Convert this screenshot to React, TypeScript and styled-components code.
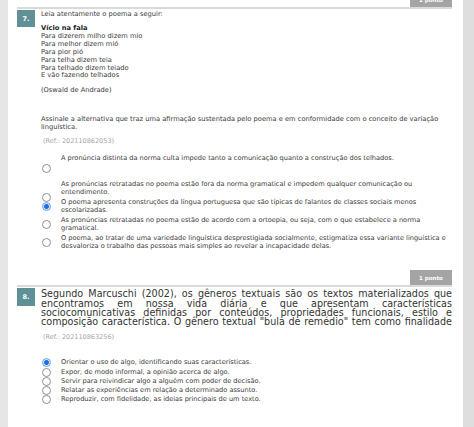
import React from "react";
import styled, { createGlobalStyle } from "styled-components";

const Global = createGlobalStyle`
  html, body { margin: 0; padding: 0; background: #fff; }
  body { font-family: "DejaVu Sans", Verdana, sans-serif; color: #3a3a3a; }
  * { box-sizing: border-box; }
`;

const Page = styled.div`
  display: flex;
  width: 474px;
  height: 427px;
  overflow: hidden;
  background: #fff;
`;

const LeftRail = styled.div`
  width: 8px;
  flex: none;
  background: #e6e6e6;
`;

const ScrollTrack = styled.div`
  width: 11px;
  flex: none;
  background: #dedede;
`;

const Main = styled.main`
  flex: 1;
  min-width: 0;
  padding: 0 11px 0 9px;
`;

const QuestionBlock = styled.section<{ $offset: number; $after: number }>`
  margin-top: ${(p) => p.$offset}px;
  margin-bottom: ${(p) => p.$after}px;
`;

const Header = styled.div`
  display: flex;
  justify-content: flex-end;
  height: 17px;
  border-bottom: 2px solid #dadada;
`;

const Badge = styled.div`
  width: 42px;
  height: 15px;
  background: #a4a4a4;
  color: #fff;
  font-weight: bold;
  font-size: 5.5px;
  display: flex;
  align-items: center;
  justify-content: center;
`;

const Body = styled.div`
  display: grid;
  grid-template-columns: 18px 1fr;
  column-gap: 6px;
  padding-top: 1px;
`;

const NumBox = styled.div<{ $h: number }>`
  height: ${(p) => p.$h}px;
  background: #5e9096;
  color: #fff;
  font-weight: bold;
  font-size: 6.5px;
  display: flex;
  align-items: center;
  justify-content: center;
`;

const Content = styled.div`
  min-width: 0;
  font-size: 6.7px;
`;

const Para = styled.p<{ $top: number; $lh?: number }>`
  margin: ${(p) => p.$top}px 0 0;
  line-height: ${(p) => p.$lh ?? 8}px;
  white-space: nowrap;
`;

const PoemTitle = styled.b`
  color: #222;
  font-weight: bold;
`;

const Lead = styled.p`
  margin: 1px 0 0;
  font-size: 9.6px;
  line-height: 9.25px;
  color: #333;
  text-align: justify;
  text-align-last: justify;
`;

const Ref = styled.p<{ $top: number }>`
  margin: ${(p) => p.$top}px 0 0 2px;
  font-size: 6.5px;
  line-height: 8px;
  color: #a5a5a5;
`;

const OptionList = styled.div<{ $top: number; $gap: number }>`
  margin-top: ${(p) => p.$top}px;
  display: flex;
  flex-direction: column;
  row-gap: ${(p) => p.$gap}px;
`;

const OptionRow = styled.div<{ $extra?: number; $lh: number }>`
  display: grid;
  grid-template-columns: 20px 1fr;
  align-items: center;
  padding-bottom: ${(p) => p.$extra ?? 0}px;
  line-height: ${(p) => p.$lh}px;
`;

const RadioCell = styled.div<{ $dropped: boolean }>`
  display: flex;
  padding-left: 1px;
  ${(p) => (p.$dropped ? "align-self: start; height: 0; overflow: visible;" : "")}
`;

const Radio = styled.span<{ $checked?: boolean; $drop?: number }>`
  flex: none;
  width: 9px;
  height: 9px;
  margin-top: ${(p) => p.$drop ?? 0}px;
  border-radius: 50%;
  border: 1px solid ${(p) => (p.$checked ? "#6fa3e8" : "#8e8e8e")};
  background: ${(p) =>
    p.$checked
      ? "radial-gradient(circle, #1f6fe0 0 2.1px, #d6e6fb 2.7px)"
      : "#fff"};
`;

const OptText = styled.div`
  white-space: nowrap;
  font-size: 6.6px;
`;

type Opt = { lines: string[]; checked?: boolean; drop?: number; extra?: number };

const q7Options: Opt[] = [
  {
    lines: ["A pronúncia distinta da norma culta impede tanto a comunicação quanto a construção dos telhados."],
    drop: 9.5,
    extra: 16,
  },
  {
    lines: [
      "As pronúncias retratadas no poema estão fora da norma gramatical e impedem qualquer comunicação ou",
      "entendimento.",
    ],
    drop: 13,
  },
  {
    lines: [
      "O poema apresenta construções da língua portuguesa que são típicas de falantes de classes sociais menos",
      "escolarizadas.",
    ],
    checked: true,
  },
  {
    lines: [
      "As pronúncias retratadas no poema estão de acordo com a ortoepia, ou seja, com o que estabelece a norma",
      "gramatical.",
    ],
  },
  {
    lines: [
      "O poema, ao tratar de uma variedade linguística desprestigiada socialmente, estigmatiza essa variante linguística e",
      "desvaloriza o trabalho das pessoas mais simples ao revelar a incapacidade delas.",
    ],
  },
];

const q8Options: Opt[] = [
  { lines: ["Orientar o uso de algo, identificando suas características."], checked: true },
  { lines: ["Expor, de modo informal, a opinião acerca de algo."] },
  { lines: ["Servir para reivindicar algo a alguém com poder de decisão."] },
  { lines: ["Relatar as experiências em relação a determinado assunto."] },
  { lines: ["Reproduzir, com fidelidade, as ideias principais de um texto."] },
];

const Options = ({ items, top, gap, lh }: { items: Opt[]; top: number; gap: number; lh: number }) => (
  <OptionList $top={top} $gap={gap}>
    {items.map((o, i) => (
      <OptionRow key={i} $extra={o.extra} $lh={lh}>
        <RadioCell $dropped={o.drop !== undefined}>
          <Radio $checked={o.checked} $drop={o.drop} />
        </RadioCell>
        <OptText>
          {o.lines.map((l, j) => (
            <React.Fragment key={j}>
              {j > 0 && <br />}
              {l}
            </React.Fragment>
          ))}
        </OptText>
      </OptionRow>
    ))}
  </OptionList>
);

const poem = [
  "Para dizerem milho dizem mio",
  "Para melhor dizem mió",
  "Para pior pió",
  "Para telha dizem teia",
  "Para telhado dizem teiado",
  "E vão fazendo telhados",
];

export default function App() {
  return (
    <>
      <Global />
      <Page>
        <LeftRail />
        <Main>
          <QuestionBlock $offset={-8} $after={20}>
            <Header>
              <Badge>1 ponto</Badge>
            </Header>
            <Body>
              <NumBox $h={17}>7.</NumBox>
              <Content>
                <Para $top={0}>Leia atentamente o poema a seguir:</Para>
                <Para $top={7} $lh={7.9}>
                  <PoemTitle>Vício na fala</PoemTitle>
                  {poem.map((l) => (
                    <React.Fragment key={l}>
                      <br />
                      {l}
                    </React.Fragment>
                  ))}
                </Para>
                <Para $top={6}>(Oswald de Andrade)</Para>
                <Para $top={21}>
                  Assinale a alternativa que traz uma afirmação sustentada pelo poema e em conformidade com o conceito de variação
                  <br />
                  linguística.
                </Para>
                <Ref $top={6}>(Ref.: 202110862053)</Ref>
                <Options items={q7Options} top={9} gap={2} lh={8} />
              </Content>
            </Body>
          </QuestionBlock>

          <QuestionBlock $offset={0} $after={0}>
            <Header>
              <Badge>1 ponto</Badge>
            </Header>
            <Body>
              <NumBox $h={18}>8.</NumBox>
              <Content>
                <Lead>
                  Segundo Marcuschi (2002), os gêneros textuais são os textos materializados que
                  <br />
                  encontramos em nossa vida diária e que apresentam características
                  <br />
                  sociocomunicativas definidas por conteúdos, propriedades funcionais, estilo e
                  <br />
                  composição característica. O gênero textual "bula de remédio" tem como finalidade
                </Lead>
                <Ref $top={7}>(Ref.: 202110863256)</Ref>
                <Options items={q8Options} top={17} gap={0} lh={9.2} />
              </Content>
            </Body>
          </QuestionBlock>
        </Main>
        <ScrollTrack />
      </Page>
    </>
  );
}
